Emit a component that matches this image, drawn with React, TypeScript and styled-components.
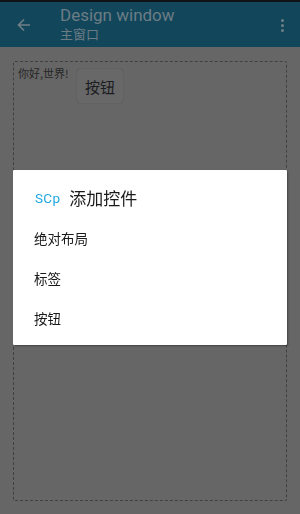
import React from "react";
import styled, { createGlobalStyle } from "styled-components";

const GlobalStyle = createGlobalStyle`
  html, body {
    margin: 0;
    padding: 0;
    background: #666666;
    font-family: Roboto, "Noto Sans CJK SC", sans-serif;
  }
`;

const Screen = styled.div`
  width: 300px;
  height: 514px;
  display: flex;
  flex-direction: column;
  background: #666666;
  overflow: hidden;
`;

const StatusBar = styled.div`
  height: 2px;
  background: #101416;
`;

const Toolbar = styled.div`
  height: 45px;
  background: #12475b;
  display: flex;
  align-items: center;
  padding: 0 0 0 14px;
`;

const IconButton = styled.div`
  width: 20px;
  height: 20px;
  display: flex;
  align-items: center;
  justify-content: center;
  color: #6f7f87;
`;

const Titles = styled.div`
  flex: 1;
  display: flex;
  flex-direction: column;
  margin-left: 26px;
  margin-top: -2px;
`;

const Title = styled.div`
  font-size: 17px;
  line-height: 18px;
  color: #6c7c85;
`;

const Subtitle = styled.div`
  font-size: 13px;
  line-height: 15px;
  margin-top: 2px;
  color: #6c7c85;
  font-family: "Noto Sans CJK SC", sans-serif;
`;

const Overflow = styled.div`
  width: 20px;
  display: flex;
  flex-direction: column;
  align-items: center;
  gap: 2px;
  margin-right: 8px;
  margin-top: 1px;
`;

const Dot = styled.span`
  width: 3px;
  height: 3px;
  border-radius: 50%;
  background: #6f7f87;
`;

const Canvas = styled.div`
  position: relative;
  margin: 14px 13px 0 13px;
  height: 438px;
  border: 1px dashed #404040;
  border-radius: 2px;
`;

const Label = styled.div`
  position: absolute;
  left: 4px;
  top: 4px;
  font-size: 11px;
  line-height: 14px;
  color: #262626;
  font-family: "Noto Sans CJK SC", sans-serif;
`;

const WidgetButton = styled.div`
  position: absolute;
  left: 63px;
  top: 7px;
  width: 46px;
  height: 34px;
  border-radius: 4px;
  background: #686868;
  box-shadow: 0 0 1px rgba(0, 0, 0, 0.35);
  display: flex;
  align-items: center;
  justify-content: center;
  font-size: 15px;
  color: #1c1c22;
  font-family: "Noto Sans CJK SC", sans-serif;
`;

const Scrim = styled.div`
  position: fixed;
  inset: 0;
  display: flex;
  align-items: center;
  justify-content: center;
`;

const Dialog = styled.div`
  width: 274px;
  box-sizing: border-box;
  background: #ffffff;
  border-radius: 1px;
  box-shadow: 1px 1px 2px rgba(0, 0, 0, 0.35);
  padding: 12px 0 7px;
  display: flex;
  flex-direction: column;
`;

const DialogHeader = styled.div`
  height: 32px;
  margin-bottom: 4px;
  display: flex;
  align-items: center;
  padding-left: 22px;
`;

const Brand = styled.span`
  font-size: 13.5px;
  color: #1ea7e0;
  letter-spacing: 0.3px;
  margin-right: 9px;
`;

const DialogTitle = styled.span`
  font-size: 17px;
  color: #1a1a1a;
  font-family: "Noto Sans CJK SC", sans-serif;
`;

const Item = styled.div`
  height: 40px;
  display: flex;
  align-items: center;
  padding-left: 21px;
  font-size: 13.5px;
  color: #1a1a1a;
  font-family: "Noto Sans CJK SC", sans-serif;
`;

const items = ["绝对布局", "标签", "按钮"];

export default function App() {
  return (
    <>
      <GlobalStyle />
      <Screen>
        <StatusBar />
        <Toolbar>
          <IconButton>
            <svg width="16" height="16" viewBox="0 0 16 16" fill="none">
              <path
                d="M14 8H2.5M8 2.5L2.5 8L8 13.5"
                stroke="currentColor"
                strokeWidth="1.6"
              />
            </svg>
          </IconButton>
          <Titles>
            <Title>Design window</Title>
            <Subtitle>主窗口</Subtitle>
          </Titles>
          <Overflow>
            <Dot />
            <Dot />
            <Dot />
          </Overflow>
        </Toolbar>
        <Canvas>
          <Label>你好,世界!</Label>
          <WidgetButton>按钮</WidgetButton>
        </Canvas>
      </Screen>
      <Scrim>
        <Dialog>
          <DialogHeader>
            <Brand>SCp</Brand>
            <DialogTitle>添加控件</DialogTitle>
          </DialogHeader>
          {items.map((it) => (
            <Item key={it}>{it}</Item>
          ))}
        </Dialog>
      </Scrim>
    </>
  );
}
